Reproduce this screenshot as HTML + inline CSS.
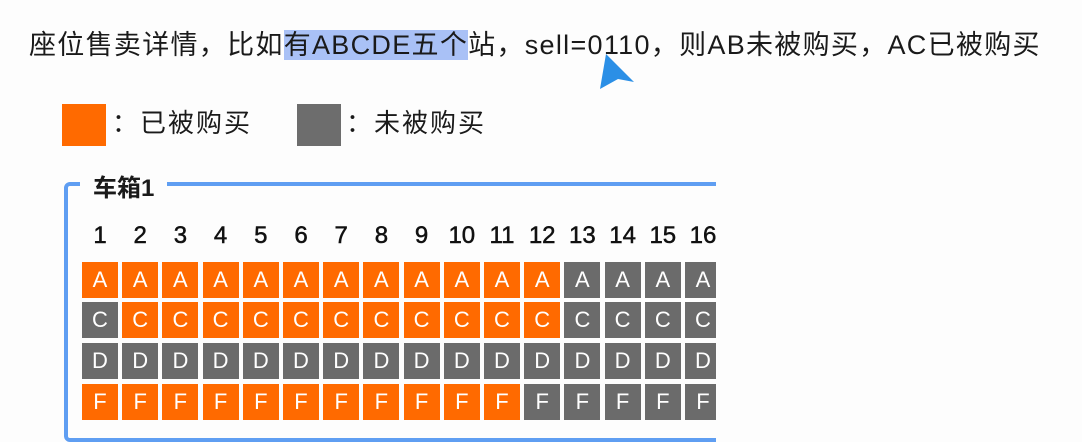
<!DOCTYPE html>
<html><head><meta charset="utf-8"><style>
body{margin:0;width:1082px;height:442px;background:#fdfdfd;position:relative;overflow:hidden;font-family:"Liberation Sans","Noto Sans CJK SC",sans-serif;color:#1a1a1a}
.t{position:absolute;left:29px;top:28px;font-size:27px;letter-spacing:1.3px;line-height:34px;white-space:nowrap}
.hl{background:#a9c1f6}
.sq{position:absolute;width:44px;height:42px;top:104px}
.lg{position:absolute;top:106px;font-size:26px;letter-spacing:2px;line-height:34px}
.box{position:absolute;left:64px;top:182px;width:700px;height:252px;border:4px solid #5f9ef2;border-radius:6px}
.clip{position:absolute;left:0;top:170px;width:716px;height:272px;overflow:hidden}
.title{position:absolute;left:80px;top:174px;background:#fdfdfd;padding:0 13px;font-size:24px;font-weight:bold;line-height:30px}
.n{position:absolute;top:222px;width:40px;text-align:center;font-size:24px;line-height:28px;color:#111;-webkit-text-stroke:0.5px #111}
.c{position:absolute;width:36px;height:36px;color:#fff;font-size:22px;line-height:36px;text-align:center}
.o{background:#ff6a00}.g{background:#6b6b6b}
</style></head><body>
<div class="t">座位售卖详情，比如<span class="hl">有ABCDE五个</span>站，sell=0110，则AB未被购买，AC已被购买</div>
<svg style="position:absolute;left:596px;top:52px" width="42" height="40" viewBox="0 0 42 40"><path d="M10 2 L38 30 L22 27 L4 37 Z" fill="#2b8fe6"/></svg>
<div class="sq o" style="left:62px"></div><div class="lg" style="left:112px">：已被购买</div>
<div class="sq g" style="left:297px;background:#6d6d6d"></div><div class="lg" style="left:346px">：未被购买</div>
<div class="clip" style="top:0;height:442px">
<div class="box"></div>
<div class="title">车箱1</div>
<div id="g"></div>
</div>
<script>
var h='',rows=[['A',262,12,0],['C',302,12,1],['D',343,0,0],['F',384,11,0]];
for(var i=0;i<16;i++){var x=82+i*40.2;h+='<div class="n" style="left:'+(x-2)+'px">'+(i+1)+'</div>';
rows.forEach(function(r){var o=(i<r[2]&&i>=r[3]);h+='<div class="c '+(o?'o':'g')+'" style="left:'+x+'px;top:'+r[1]+'px">'+r[0]+'</div>';});}
document.getElementById('g').innerHTML=h;
</script>
</body></html>
